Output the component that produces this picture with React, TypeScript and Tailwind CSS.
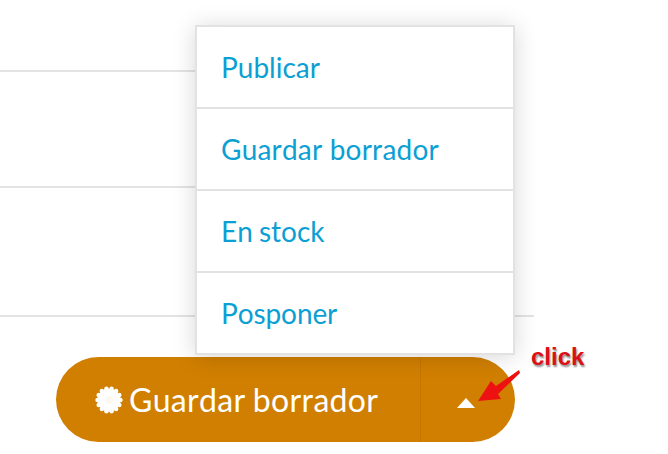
import React from "react";

const items = [
  { t: "Publicar", c: "" },
  { t: "Guardar borrador", c: "tracking-[0.2px]" },
  { t: "En stock", c: "[word-spacing:-1px]" },
  { t: "Posponer", c: "tracking-[-0.1px]" },
];

function Badge() {
  const n = 14;
  return (
    <svg width="28" height="28" viewBox="0 0 28 28" className="shrink-0">
      <circle cx="14" cy="14" r="11.5" fill="#fff" />
      {Array.from({ length: n }).map((_, i) => (
        <circle
          key={i}
          cx={14 + 11.5 * Math.cos((i * 2 * Math.PI) / n)}
          cy={14 + 11.5 * Math.sin((i * 2 * Math.PI) / n)}
          r="2.2"
          fill="#fff"
        />
      ))}
      <circle cx="14" cy="14" r="4" fill="#fbf7f1" />
    </svg>
  );
}

export default function App() {
  return (
    <div className="relative w-[668px] h-[454px] overflow-hidden bg-white font-['Lato','Noto_Sans',sans-serif] [font-kerning:none]">
      <div className="w-[534px] flex flex-col">
        <div className="w-[400px] h-[72px] border-b-2 border-[#e3e3e3]" />
        <div className="w-[400px] h-[116px] border-b-2 border-[#e3e3e3]" />
        <div className="h-[129px] border-b-2 border-[#e3e3e3]" />
      </div>

      <div className="mt-[40px] ml-[56px] w-[459px] h-[85px] rounded-full bg-[#d17f00] flex items-stretch text-white">
        <div className="w-[365px] flex items-center pl-[39px] gap-[6px] border-r border-[#c27600] text-[32px] leading-none pt-px">
          <Badge />
          <span className="tracking-[0.3px] [word-spacing:-1px]">Guardar borrador</span>
        </div>
        <div className="flex-1 flex items-center justify-center pr-[4px] pt-[7px]">
          <div className="w-0 h-0 border-l-[9px] border-r-[9px] border-b-[10px] border-l-transparent border-r-transparent border-b-white" />
        </div>
      </div>

      <div className="absolute left-[195px] top-[25px] w-[320px] h-[330px] bg-white border-2 border-[#e2e2e2] shadow-[0_2px_22px_rgba(0,0,0,0.16)] flex flex-col">
        {items.map(({ t, c }, i) => (
          <div
            key={t}
            className={
              i < 3
                ? "h-[82px] flex items-center pl-[24px] text-[28px] leading-none text-[#0b9fd3] border-b-2 border-[#e2e2e2]"
                : "flex-1 flex items-center pl-[24px] text-[28px] leading-none text-[#0b9fd3]"
            }
          >
            <span className={c}>{t}</span>
          </div>
        ))}
      </div>

      <svg className="absolute left-[474px] top-[366px]" width="50" height="40" viewBox="0 0 50 40">
        <path d="M45 4 L22 20 L17 15 L4 35 L27 33 L24 28 L46 7 Z" fill="#ee1111" />
      </svg>

      <div className="absolute left-[531px] top-[343px] text-[24px] leading-[28px] font-bold text-[#dd0f16] font-['Liberation_Sans',sans-serif] [text-shadow:1px_2px_2px_rgba(0,0,0,0.45)]">
        click
      </div>
    </div>
  );
}
